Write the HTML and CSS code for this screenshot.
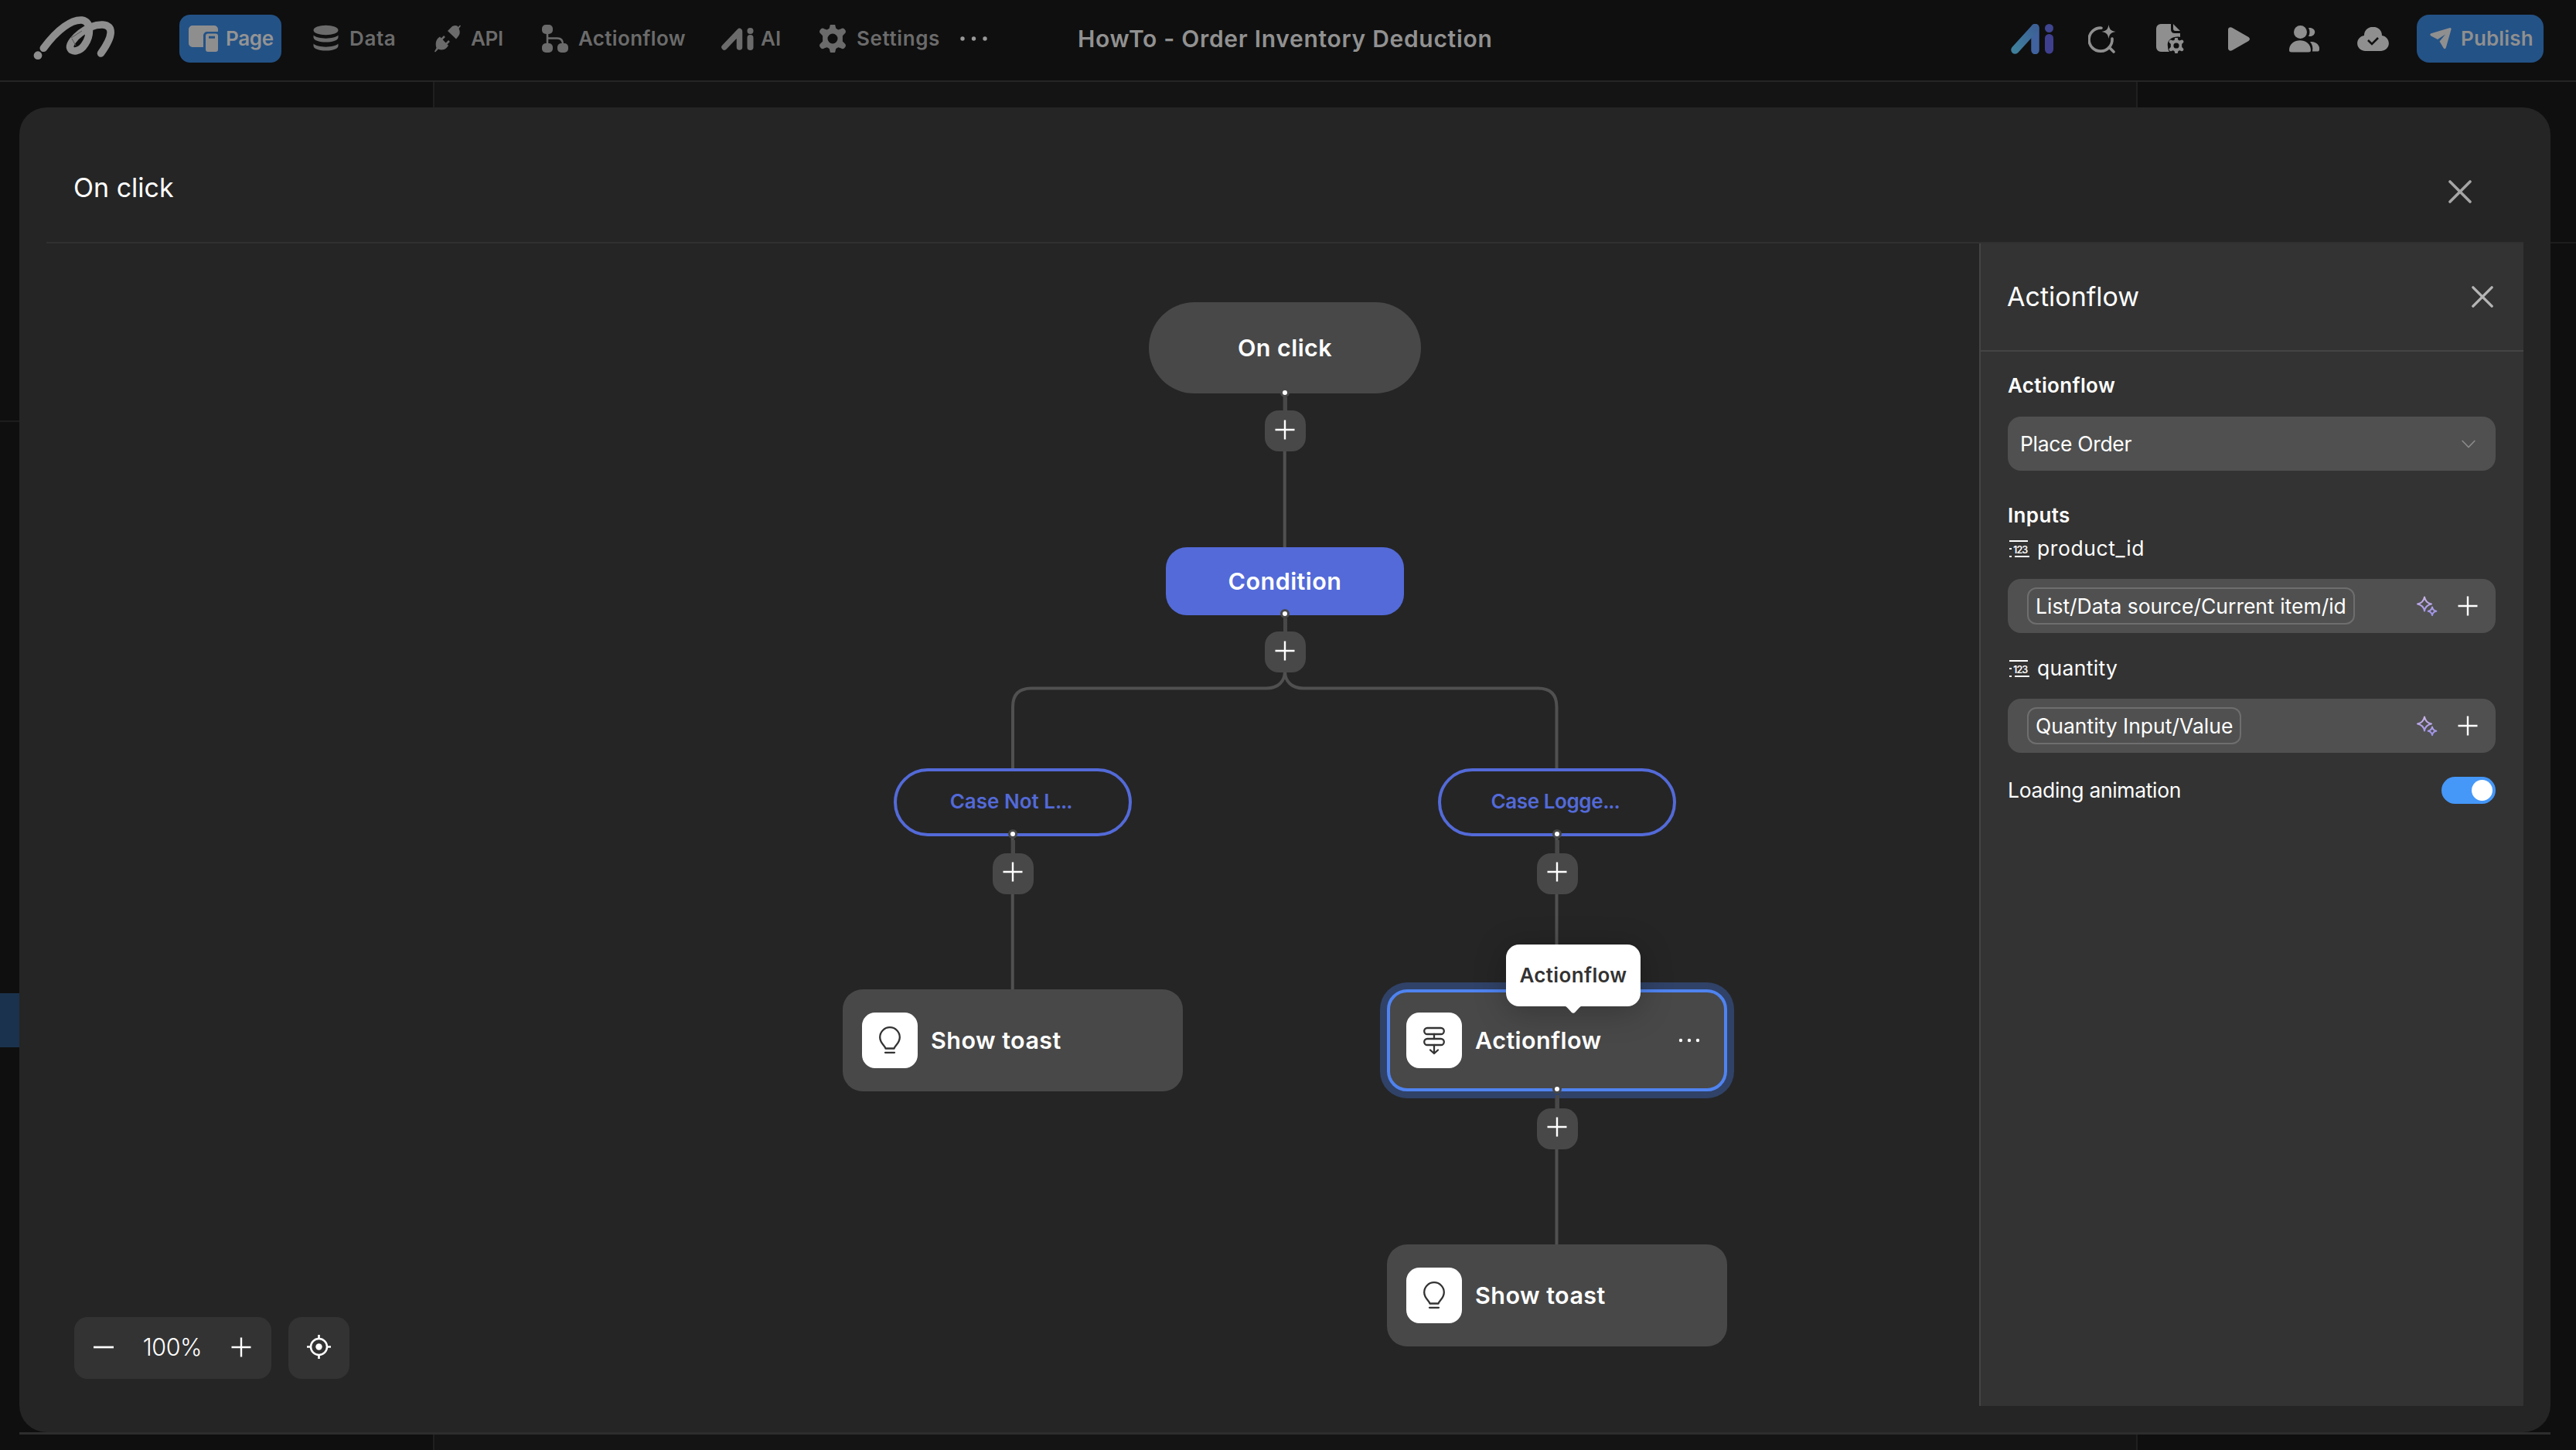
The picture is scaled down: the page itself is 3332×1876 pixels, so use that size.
FILE: index.html
```html
<!DOCTYPE html>
<html lang="en">
<head>
<meta charset="utf-8">
<title>HowTo - Order Inventory Deduction</title>
<link rel="stylesheet" href="styles.css">
</head>
<body>
<svg class="defs" width="0" height="0" aria-hidden="true">
  <defs>
    <linearGradient id="spark" x1="0" y1="0" x2="0" y2="1"><stop offset="0" stop-color="#c9b3e6"/><stop offset="1" stop-color="#9c90e8"/></linearGradient>
    <linearGradient id="aiA" x1="0" y1="1" x2="1" y2="0"><stop offset="0" stop-color="#3f7f9c"/><stop offset="1" stop-color="#3c6196"/></linearGradient>
    <symbol id="i-gear" viewBox="0 0 36 36"><path fill-rule="evenodd" d="M14.5 1.5a3.5 2.500 0 0 1 7 0l.8 3.300 3 1.700 3.200-1a3.500 3.500 0 0 1 4.600 6.500l-1 .9-1.200 1.500v7l1.200 1.300 1 1a3.500 3.500 0 0 1-4.600 6.500l-3.200-1-3 1.700-.8 3.300a3.500 2.500 0 0 1-7 0l-.8-3.300-3-1.700-3.200 1a3.500 3.500 0 0 1-4.600-6.500l1-1 1.200-1.300v-7L3.900 12.900l-1-.9A3.500 3.500 0 0 1 7.500 5.500l3.200 1 3-1.700zM18 11.500a6.500 6.500 0 1 0 0 13 6.500 6.500 0 0 0 0-13z"/></symbol>
    <symbol id="i-plus" viewBox="0 0 26 26"><path d="M13 0.500v25M0.500 13h25" fill="none" stroke="#fff" stroke-width="2.400"/></symbol>
    <symbol id="i-num" viewBox="0 0 26 22"><path d="M0 1h24M0 11h3M0 21h3M7 21h19" fill="none" stroke="#fff" stroke-width="2"/></symbol>
    <symbol id="i-spark" viewBox="0 0 28 26"><path d="M11 1.500c1 5.500 3.500 8 9 9-5.500 1-8 3.500-9 9-1-5.500-3.500-8-9-9 5.500-1 8-3.500 9-9zM21 14.500c.6 3.300 2 4.700 5.300 5.300-3.300.6-4.700 2-5.300 5.300-.6-3.300-2-4.700-5.300-5.300 3.300-.6 4.700-2 5.300-5.300z" fill="none" stroke="url(#spark)" stroke-width="2" stroke-linejoin="round"/></symbol>
    <symbol id="i-bulb" viewBox="0 0 28 36"><path d="M8.500 28.500c-.5-3.500-7.300-6.500-7.300-14.500a12.800 12.800 0 0 1 25.600 0c0 8-6.800 11-7.300 14.500zM8 33.800h12" fill="none" stroke="#333" stroke-width="2.300" stroke-linejoin="round" stroke-linecap="round"/></symbol>
    <symbol id="i-close" viewBox="0 0 30 30"><path d="M2 2l26 26M28 2L2 28" fill="none" stroke="currentColor" stroke-width="3.600" stroke-linecap="round"/></symbol>
  </defs>
</svg>

<div class="app">
  <header class="topbar">
    <svg class="logo" viewBox="0 0 114 62" width="114" height="62"><circle cx="9" cy="52.700" r="5.400"/><path d="M17.300 43.300C36 18 54 6 67 7c14 2 10 22 4 31-6 10-18 12-19.500 4C51 33 74 12 94 13c14 1 14 14-2.500 37" transform="translate(-1 0)" fill="none" stroke="#8e8e8e" stroke-width="9.600" stroke-linecap="round"/><path d="M52 30L66 21M53 31l5 9" stroke="#555" stroke-width="1" fill="none"/></svg>
    <nav class="nav">
      <a class="tab active"><svg width="38" height="35" viewBox="0 0 38 35"><path d="M5 0h28a5 5 0 0 1 5 5v3H24a5 5 0 0 0-5 5v15H5a5 5 0 0 1-5-5V5a5 5 0 0 1 5-5z"/><path fill-rule="evenodd" d="M25 10.500h10a3 3 0 0 1 3 3V31a3 3 0 0 1-3 3H25a3 3 0 0 1-3-3V13.500a3 3 0 0 1 3-3zm1 3.200v3h8v-3z"/></svg><span class="snug">Page</span></a>
      <a class="tab"><svg width="34" height="36" viewBox="0 0 34 36"><ellipse cx="16.500" cy="7" rx="16" ry="6.200"/><path d="M.5 13.500c5 5.500 27 5.500 32 0v3c-1 8-31 8-32 0zM.5 24.500c5 5.500 27 5.500 32 0v3c-1 8-31 8-32 0z"/></svg><span class="wide">Data</span></a>
      <a class="tab"><svg width="34" height="36" viewBox="0 0 34 36"><path d="M19 6l4-4c4-2 7-1 7.500 1L33 .5l1 1L31.500 5c2 4 1.500 8-1.500 11l-2 2.500L17 8zM5 17l2-1.500L18 27l-2.500 3C12 33 8 33 5 31.500L1 35.500 0 34.500 2.500 30C1 25 1.500 20.500 5 17z"/><path d="M9 19l4-4M15 25l4-4" stroke="#6b6b6b" stroke-width="2.500"/></svg><span class="snug">API</span></a>
      <a class="tab"><svg width="34" height="36" viewBox="0 0 34 36"><rect x="0" y="0" width="14" height="12" rx="5"/><rect x="0" y="24" width="14" height="12" rx="5"/><rect x="20" y="24" width="14" height="12" rx="5"/><path d="M7 10v15M7 17.500h13q7 0 7 8" fill="none" stroke="#6b6b6b" stroke-width="2.600"/></svg><span class="open">Actionflow</span></a>
      <a class="tab tab-ai"><svg width="42" height="29" viewBox="0 0 42 29"><path d="M4 25L23.500 4.500V25" fill="none" stroke="#6b6b6b" stroke-width="7.500" stroke-linecap="round" stroke-linejoin="round"/><path d="M37.500 13v12" stroke="#6b6b6b" stroke-width="8" stroke-linecap="round"/><circle cx="37.500" cy="4" r="4"/></svg><span>AI</span></a>
      <a class="tab"><svg width="36" height="36"><use href="#i-gear"/></svg><span class="wide">Settings</span></a>
      <a class="tab"><svg width="36" height="6" viewBox="0 0 36 6"><g fill="#999"><circle cx="3" cy="3" r="2.700"/><circle cx="17.500" cy="3" r="2.700"/><circle cx="32" cy="3" r="2.700"/></g></svg></a>
    </nav>
    <h1 class="project">HowTo - Order Inventory Deduction</h1>
    <div class="tools">
      <svg width="56" height="39" viewBox="0 0 56 39"><path d="M31.500 5v29" stroke="#40629f" stroke-width="10.500" stroke-linecap="round"/><path d="M5.500 33.500L31 5.500" stroke="url(#aiA)" stroke-width="10.500" stroke-linecap="round"/><path d="M49.500 18.500v14.500" stroke="#3f3f8f" stroke-width="11" stroke-linecap="round"/><circle cx="49.500" cy="5.500" r="5.500" fill="#3f4590"/></svg>
      <svg width="36" height="37" viewBox="0 0 36 37"><path d="M17 4.200A15 15 0 1 0 31 18M27 29l6 6" fill="none" stroke="#8f8f8f" stroke-width="3.600" stroke-linecap="round"/><path d="M26.500 0c1 6 3 8 9 9-6 1-8 3-9 9-1-6-3-8-9-9 6-1 8-3 9-9z"/></svg>
      <svg width="36" height="38" viewBox="0 0 36 38"><path d="M6 0h13v7q0 5 5 5h7v5c-8-2-18 3-16 12 0 3 1 6 2 7H6a6 6 0 0 1-6-6V6a6 6 0 0 1 6-6zM22 0l9 9h-6q-3 0-3-3z"/><svg x="16" y="18" width="20" height="20" viewBox="0 0 36 36"><use href="#i-gear"/></svg></svg>
      <svg width="29" height="31" viewBox="0 0 29 31"><path d="M0 3.500C0 .5 3 -.5 5.500 1L26.500 13q3 2.500 0 5L5.500 30C3 31.500 0 30.500 0 27.500z"/></svg>
      <svg width="40" height="35" viewBox="0 0 40 35"><circle cx="14.500" cy="8.500" r="8.500"/><path d="M0 32c0-17 28-17 28 0q0 2.500-3 2.500H3Q0 34.500 0 32zM25 3c11-1 11 12 0 11 2-4 2-7 0-11zM27 21c8-1 13 5 12 10 0 2-1 2.500-3 2.500h-6c1-5 0-9-3-12.500z"/></svg>
      <svg width="41" height="31" viewBox="0 0 41 31"><path d="M9 11C9-4 32-4 32 11c12 2 12 19-1 20H10C-3 30-3 13 9 11z"/><path d="M14 17l5 5 8-8" fill="none" stroke="#111" stroke-width="2.600"/></svg>
    </div>
    <button class="publish"><svg width="28" height="28" viewBox="0 0 28 28"><path d="M25 .3q3-.8 2.500 2L21 25q-1 4-3.500 1l-5-8.500L20 8.500 10 15 1.500 10.500Q-1 8.500 1.500 7.200z"/></svg><span>Publish</span></button>
  </header>
  <main class="workspace">
    <aside class="left-panel"><div class="left-section"></div><div class="left-active"></div></aside>
    <section class="stage"></section>
    <aside class="right-panel"><div class="right-head"></div></aside>
  </main>
</div>
<div class="modal-edge"></div>

<div class="modal">
  <div class="modal-head">
    <h2>On click</h2>
    <svg class="modal-close" width="30" height="30"><use href="#i-close"/></svg>
  </div>
  <div class="modal-body">
    <div class="canvas">
      <div class="flow">
        <svg class="edges" width="2560" height="1876" viewBox="0 0 2560 1876">
          <path d="M1661.700 508V708M1662 868c0 14-9 22.500-24 22.500H1334q-24 0-24 24V996M1662 868c0 14 9 22.500 24 22.500h303.500q24 0 24 24V996M1309.700 1080v201M2013.500 1080v201M2013.500 1410v201" fill="none" stroke="#505050" stroke-width="4"/>
        </svg>

        <div class="node start n-start">On click</div>
        <div class="node condition n-cond">Condition</div>
        <div class="node case n-case1"><span>Case Not L</span><span class="dots">...</span></div>
        <div class="node case tight n-case2"><span>Case Logge</span><span class="dots">...</span></div>
        <div class="node action n-toast1"><i class="badge"><svg width="28" height="36"><use href="#i-bulb"/></svg></i><span>Show toast</span></div>
        <div class="node action selected n-flow"><i class="badge"><svg width="28" height="38" viewBox="0 0 28 38"><g fill="none" stroke="#333" stroke-width="2.300" stroke-linecap="round" stroke-linejoin="round"><rect x="1.200" y="3" width="25.600" height="8" rx="4"/><rect x="1.200" y="17" width="25.600" height="8" rx="4"/><path d="M14 11v6M14 25v11M9 31.500l5 4.500 5-4.500"/></g></svg></i><span>Actionflow</span><svg class="more" width="28" height="6" viewBox="0 0 28 6"><g fill="#fff"><circle cx="3" cy="3" r="2.200"/><circle cx="14" cy="3" r="2.200"/><circle cx="25" cy="3" r="2.200"/></g></svg></div>
        <div class="node action n-toast2"><i class="badge"><svg width="28" height="36"><use href="#i-bulb"/></svg></i><span>Show toast</span></div>

        <div class="adder a1"><svg width="26" height="26"><use href="#i-plus"/></svg></div>
        <div class="adder a2"><svg width="26" height="26"><use href="#i-plus"/></svg></div>
        <div class="adder a3"><svg width="26" height="26"><use href="#i-plus"/></svg></div>
        <div class="adder a4"><svg width="26" height="26"><use href="#i-plus"/></svg></div>
        <div class="adder a5"><svg width="26" height="26"><use href="#i-plus"/></svg></div>

        <div class="tooltip"><span>Actionflow</span><svg class="tip" width="28" height="11" viewBox="0 0 28 11"><path d="M0 0q4 0 6.500 3l5 5.500q2.500 2.500 5 0l5-5.500Q24 0 28 0z" fill="#fff"/></svg></div>
      </div>
      <div class="zoombar">
        <div class="zoom"><svg width="26" height="26" viewBox="0 0 26 26"><path d="M0 13h26" stroke="#fff" stroke-width="2.700"/></svg><span>100%</span><svg width="26" height="26"><use href="#i-plus"/></svg></div>
        <div class="locate"><svg width="31" height="31" viewBox="0 0 31 31"><circle cx="15.500" cy="15.500" r="10.500" fill="none" stroke="#fff" stroke-width="2.500"/><circle cx="15.500" cy="15.500" r="4.200" fill="#fff"/><path d="M15.500 0v5.500M15.500 25.500V31M0 15.500h5.500M25.500 15.500H31" stroke="#fff" stroke-width="2.700"/></svg></div>
      </div>
    </div>

    <aside class="inspector">
      <div class="inspector-head"><h3>Actionflow</h3><svg class="panel-close" width="28" height="28"><use href="#i-close"/></svg></div>
      <div class="inspector-body">
        <div class="line bold">Actionflow</div>
        <div class="field select"><span class="snug">Place Order</span><svg width="18" height="11" viewBox="0 0 18 11"><path d="M.7 1l8.300 8.500L17.300 1" fill="none" stroke="#8b8b8b" stroke-width="1.600"/></svg></div>
        <div class="line bold inputs">Inputs</div>
        <div class="line name"><i class="num"><svg width="26" height="22"><use href="#i-num"/></svg><b>123</b></i><span class="wide">product_id</span></div>
        <div class="field value"><span class="chip">List/Data source/Current item/id</span><svg width="28" height="26"><use href="#i-spark"/></svg><svg width="26" height="26"><use href="#i-plus"/></svg></div>
        <div class="line name second"><i class="num"><svg width="26" height="22"><use href="#i-num"/></svg><b>123</b></i><span class="open">quantity</span></div>
        <div class="field value"><span class="chip">Quantity Input/Value</span><svg width="28" height="26"><use href="#i-spark"/></svg><svg width="26" height="26"><use href="#i-plus"/></svg></div>
        <div class="line loading"><span class="snug">Loading animation</span><div class="toggle"></div></div>
      </div>
    </aside>
  </div>
</div>
</body>
</html>
```
FILE: styles.css
```css
*, *::before, *::after { box-sizing: border-box; }
body { margin: 0; width: 3332px; height: 1876px; overflow: hidden; position: relative; background: #0f0f0f; color: #fff; font: 400 26.500px/36px Inter, "Liberation Sans", sans-serif; }
h1, h2, h3 { margin: 0; font-weight: 400; }
svg { display: block; flex: none; }
span { white-space: nowrap; }
.snug { letter-spacing: -.33px; }
.open { letter-spacing: .33px; }
.wide { letter-spacing: .6px; }
.defs { position: absolute; }
.app { height: 1876px; display: flex; flex-direction: column; }

.topbar { height: 106px; border-bottom: 2px solid #252525; padding: 0 42px 4px 40px; display: flex; align-items: center; }
.logo { fill: #8e8e8e; margin-right: 78px; }
.nav { display: grid; grid-template-columns: 173px 157px 139px 232px 126px 183px 42px; align-items: center; color: #6b6b6b; fill: #6b6b6b; font-size: 26px; font-weight: 600; }
.tab { display: flex; align-items: center; gap: 13px; height: 62px; }
.tab.active { width: 132px; padding-left: 12px; gap: 10px; margin-right: 41px; border-radius: 14px; background: #235286; color: #949494; fill: #8e8e8e; }
.tab-ai { gap: 9px; }
.project { font-size: 30px; font-weight: 600; letter-spacing: .7px; color: #919191; margin-left: 110px; width: 1207px; white-space: nowrap; }
.tools { display: grid; grid-template-columns: 100px 88px 93px 79px 88px 77px; align-items: center; fill: #8f8f8f; }
.publish { flex: none; width: 164px; height: 62px; border: 0; border-radius: 16px; background: #235286; color: #8f8f8f; fill: #8f8f8f; font: 600 26px/36px Inter, sans-serif; letter-spacing: .15px; padding: 0 0 0 17px; display: flex; align-items: center; gap: 12px; }

.workspace { flex: 1; display: flex; }
.left-panel { width: 562px; border-right: 2px solid #1f1f1f; }
.left-section { height: 440px; border-bottom: 2px solid #1d1d1d; }
.left-active { margin-top: 739px; height: 70px; background: #1a324d; }
.stage { flex: 1; background: #141414; }
.right-panel { width: 569px; border-left: 2px solid #1f1f1f; }
.right-head { height: 209px; border-bottom: 2px solid #1d1d1d; }

.modal-edge { position: absolute; left: 25px; top: 1853px; width: 3274px; height: 3px; background: #2d2d2d; }
.modal { position: absolute; left: 25px; top: 139px; width: 3274px; height: 1714px; border-radius: 35px; background: #252525; display: flex; flex-direction: column; }
.modal-head { margin: 0 35px; height: 176px; border-bottom: 2px solid #303030; padding: 34px 67px 0 35px; display: flex; align-items: center; justify-content: space-between; }
.modal-head h2 { font-size: 34px; }
.modal-close { color: #a5a5a5; margin-top: 10px; }
.modal-body { flex: 1; display: flex; padding-right: 35px; }
.canvas { flex: 1; position: relative; overflow: hidden; border-radius: 0 0 0 35px; }
.flow { position: absolute; left: -25px; top: -315px; width: 2560px; height: 1876px; }
.edges { position: absolute; left: 0; top: 0; }

.node { position: absolute; display: flex; align-items: center; justify-content: center; font-size: 30.500px; font-weight: 600; letter-spacing: .45px; }
.node::after { content: ""; position: absolute; left: 50%; bottom: -5px; width: 12px; height: 12px; margin-left: -6px; border-radius: 50%; border: 3.400px solid #484848; background: #fff; }
.start { width: 352px; height: 118px; border-radius: 59px; background: #484848; }
.condition { width: 308px; height: 88px; border-radius: 27px; background: #536ad8; }
.condition::after { bottom: -4px; }
.case { width: 308px; height: 88px; padding-bottom: 2px; border-radius: 44px; border: 4px solid #536ad8; color: #536ad8; font-size: 26px; letter-spacing: 0; padding-right: 5px; }
.tight { letter-spacing: -.4px; }
.dots { letter-spacing: -1.200px; }
.case::after { bottom: -7px; }
.action { width: 440px; height: 132px; border-radius: 26px; background: #484848; justify-content: flex-start; padding-left: 25px; gap: 17px; }
.action::after { display: none; }
.selected { border: 4px solid #4f83f0; padding-left: 21px; box-shadow: 0 0 0 9px #304267; }
.selected::after { display: block; bottom: -7px; }
.badge { width: 72px; height: 72px; border-radius: 17px; background: #fff; display: flex; align-items: center; justify-content: center; }
.more { margin-left: auto; margin-right: 31px; }
.n-start { left: 1486px; top: 391px; }
.n-cond { left: 1508px; top: 708px; }
.n-case1 { left: 1156px; top: 994px; }
.n-case2 { left: 1860px; top: 994px; }
.n-toast1 { left: 1090px; top: 1280px; }
.n-flow { left: 1794px; top: 1280px; }
.n-toast2 { left: 1794px; top: 1610px; }

.adder { position: absolute; width: 53px; height: 53px; border-radius: 18px; background: #484848; display: flex; align-items: center; justify-content: center; padding-bottom: 4px; }
.adder::before { content: ""; position: absolute; left: 24px; bottom: 100%; width: 5px; height: 17px; background: #484848; }
.a1 { left: 1635.500px; top: 531px; }
.a2 { left: 1635.500px; top: 817px; }
.a3 { left: 1283.500px; top: 1103.500px; }
.a4 { left: 1987.500px; top: 1103.500px; }
.a5 { left: 1987.500px; top: 1433.500px; }

.tooltip { position: absolute; left: 1948px; top: 1222px; width: 174px; height: 80px; border-radius: 17px; background: #fff; color: #333; font-size: 26px; font-weight: 600; letter-spacing: .35px; display: flex; align-items: center; justify-content: center; box-shadow: 0 6px 40px rgba(0, 0, 0, .25); }
.tip { position: absolute; left: 73px; top: 79px; }

.zoombar { position: absolute; left: 71px; top: 1389px; display: flex; gap: 22px; }
.zoom, .locate { height: 80px; border-radius: 17px; background: #333; display: flex; align-items: center; }
.zoom { width: 255px; padding: 0 26px 2px 25px; justify-content: space-between; font-size: 30.500px; font-weight: 300; letter-spacing: -.5px; }
.locate { width: 79px; justify-content: center; padding-bottom: 3px; }

.inspector { width: 704px; height: 1504px; background: #333; border-left: 2px solid #444; }
.inspector-head { height: 140px; border-bottom: 2px solid #444; padding: 0 39px 0 34px; display: flex; align-items: center; justify-content: space-between; }
.inspector-head h3 { font-size: 34px; }
.panel-close { color: #b5b5b5; }
.inspector-body { padding: 26px 36px 0 35px; }
.line { height: 36px; display: flex; align-items: center; }
.bold { font-weight: 600; font-size: 26px; letter-spacing: .35px; }
.field { height: 70px; margin-top: 22px; border-radius: 17px; background: #505050; display: flex; align-items: center; }
.select { padding: 0 26px 0 16px; justify-content: space-between; }
.inputs { margin-top: 40px; }
.name { margin-top: 6px; gap: 10px; }
.num { position: relative; width: 28px; padding: 1px 0 0 2px; font-style: normal; }
.num b { position: absolute; left: 7px; top: 6px; font-size: 12.500px; line-height: 15px; font-weight: 600; letter-spacing: -.9px; }
.value { padding: 0 23px 0 25px; gap: 26px; }
.chip { height: 48px; padding: 0 9px; border: 2px solid #6e6e6e; border-radius: 12px; display: flex; align-items: center; margin-right: auto; }
.second { margin-top: 27px; }
.loading { margin-top: 30px; justify-content: space-between; }
.toggle { width: 70px; height: 35px; border-radius: 18px; background: #4597f8; display: flex; justify-content: flex-end; padding: 4px; }
.toggle::after { content: ""; width: 27px; height: 27px; border-radius: 50%; background: #fff; }
```
